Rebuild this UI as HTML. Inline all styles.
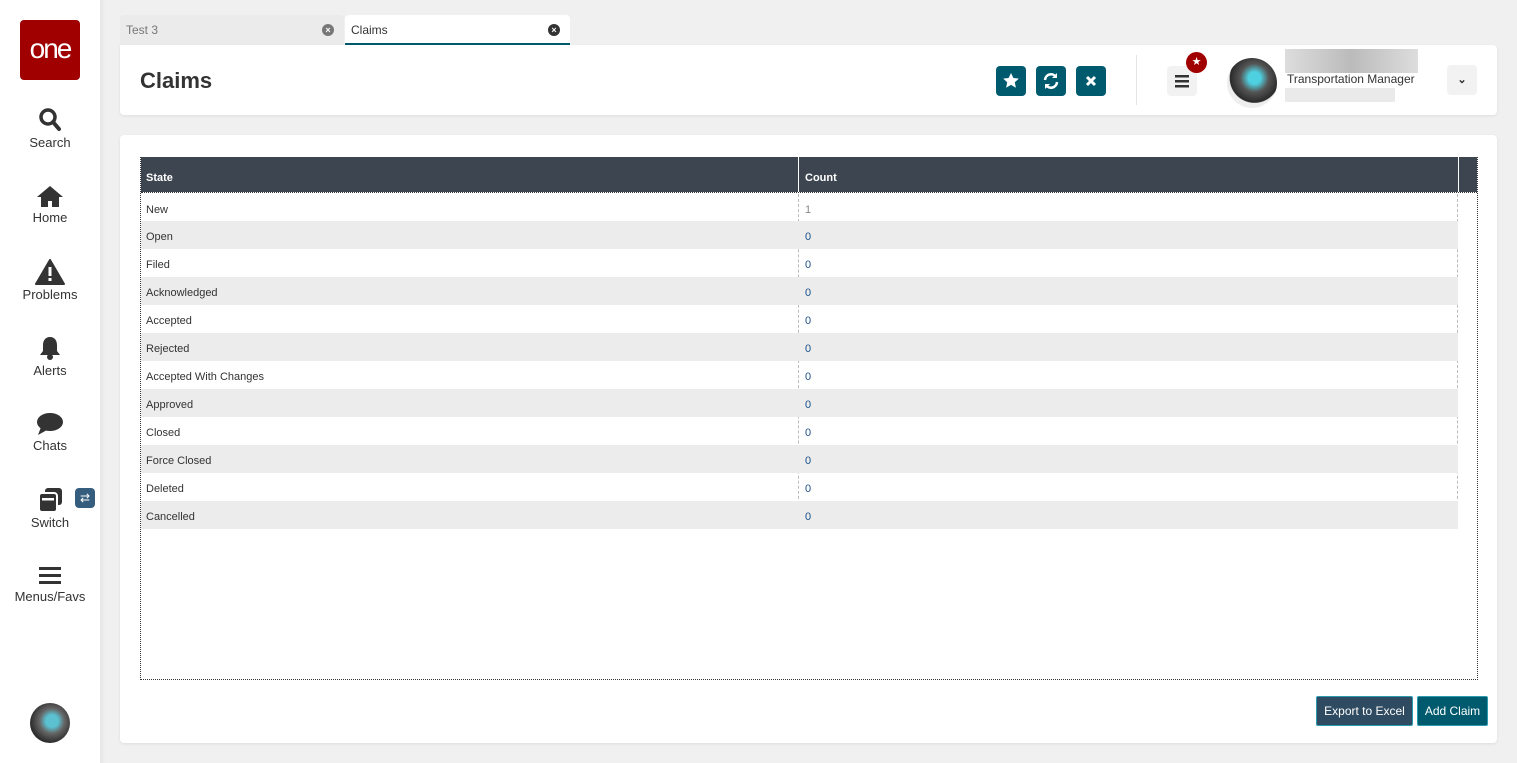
<!DOCTYPE html>
<html><head><meta charset="utf-8"><style>
*{box-sizing:border-box;margin:0;padding:0}
body{width:1517px;height:763px;background:#f0f0f0;font-family:"Liberation Sans",sans-serif;position:relative;overflow:hidden;color:#333}
.side{position:absolute;left:0;top:0;width:100px;height:763px;background:#fff}
.logo{position:absolute;left:20px;top:20px;width:60px;height:60px;background:#a00000;border-radius:4px;color:#fff;font-size:28px;text-align:center;line-height:58px;letter-spacing:-2px}
.nav{position:absolute;left:0;width:100px;text-align:center;font-size:13px;color:#333}
.nav svg{display:block;margin:0 auto 2px}
.tab{position:absolute;top:15px;height:30px;font-size:12px;line-height:30px;padding-left:6px;border-radius:4px 4px 0 0}
.x{position:absolute;right:10px;top:9px;width:12px;height:12px;border-radius:50%;color:#fff;font-size:9px;line-height:12px;text-align:center;font-weight:bold}
.card{position:absolute;background:#fff;border-radius:4px;box-shadow:0 1px 3px rgba(0,0,0,.08)}
.btn{position:absolute;top:66px;width:30px;height:30px;background:#005a6e;border-radius:4px}
.tbl{position:absolute;left:140px;top:157px;width:1338px;height:523px;border:1px dotted #333;border-top:none}
.hd{position:absolute;left:0;top:0;height:35px;width:1336px;background:#3c4550;color:#fff;font-weight:bold;font-size:11px}
.row{position:absolute;left:0;width:1317px;height:28px;font-size:11px;line-height:32px}
.row span{position:absolute;left:5px}
.row b{position:absolute;left:664px;font-weight:normal;color:#1a4f8a}
.bt{position:absolute;top:696px;height:30px;color:#fff;font-size:12px;line-height:28px;text-align:center;border:1px solid #2a9ab0;border-radius:2px}
</style></head><body>
<div class="side">
<div class="logo">one</div>
<div class="nav" style="top:107px"><svg width="24" height="26" viewBox="0 0 24 26"><circle cx="10" cy="10" r="7" fill="none" stroke="#333" stroke-width="3.5"/><path d="M15 15l6 7" stroke="#333" stroke-width="4" stroke-linecap="round"/></svg>Search</div>
<div class="nav" style="top:184px"><svg width="28" height="24" viewBox="0 0 28 24"><path d="M14 2L1 13h4v10h7v-6h4v6h7V13h4z" fill="#333"/></svg>Home</div>
<div class="nav" style="top:259px"><svg width="30" height="26" viewBox="0 0 30 26"><path d="M15 1L1 25h28z" fill="#333" stroke="#333" stroke-linejoin="round" stroke-width="2"/><rect x="13.5" y="8" width="3" height="9" fill="#fff"/><rect x="13.5" y="19" width="3" height="3" fill="#fff"/></svg>Problems</div>
<div class="nav" style="top:335px"><svg width="24" height="26" viewBox="0 0 24 26"><path d="M12 2c-5 0-7 4-7 8v6l-3 4h20l-3-4v-6c0-4-2-8-7-8z" fill="#333"/><circle cx="12" cy="22" r="3" fill="#333"/></svg>Alerts</div>
<div class="nav" style="top:412px"><svg width="28" height="24" viewBox="0 0 28 24"><ellipse cx="14" cy="10" rx="13" ry="9" fill="#333"/><path d="M5 15l-3 8 9-5z" fill="#333"/></svg>Chats</div>
<div class="nav" style="top:487px"><svg width="26" height="26" viewBox="0 0 26 26"><rect x="8" y="1" width="17" height="17" rx="3" fill="#333"/><rect x="2" y="6" width="18" height="19" rx="3" fill="#333" stroke="#fff" stroke-width="2"/><rect x="5" y="11" width="12" height="2.5" fill="#fff"/></svg>Switch</div>
<div style="position:absolute;left:75px;top:488px;width:20px;height:20px;background:#345d7e;border-radius:4px;color:#fff;font-size:12px;text-align:center;line-height:20px">⇄</div>
<div class="nav" style="top:565px"><svg width="24" height="22" viewBox="0 0 24 22"><rect x="1" y="2" width="22" height="3" fill="#333"/><rect x="1" y="9" width="22" height="3" fill="#333"/><rect x="1" y="16" width="22" height="3" fill="#333"/></svg>Menus/Favs</div>
<div style="position:absolute;left:30px;top:703px;width:40px;height:40px;border-radius:50%;background:radial-gradient(circle at 55% 45%,#5bc0d0 0 20%,#666 40%,#222 75%)"></div>
</div>
<div style="position:absolute;left:100px;top:0;width:6px;height:763px;background:linear-gradient(90deg,#e6e6e6,#f0f0f0)"></div>
<div class="tab" style="left:120px;width:224px;background:#ebebeb;color:#777">Test 3<div class="x" style="background:#777">×</div></div>
<div class="tab" style="left:345px;width:225px;background:#fff;color:#333;border-bottom:2px solid #005a6e">Claims<div class="x" style="background:#333">×</div></div>
<div class="card" style="left:120px;top:45px;width:1377px;height:70px;border-radius:0 4px 4px 4px">
<div style="position:absolute;left:20px;top:23px;font-size:22px;font-weight:bold;color:#333">Claims</div>
<div style="position:absolute;left:1016px;top:10px;width:1px;height:50px;background:#e4e4e4"></div>
<div style="position:absolute;left:1047px;top:21px;width:30px;height:30px;background:#f2f2f2;border-radius:4px"><svg width="30" height="30"><rect x="8" y="9" width="14" height="2.5" fill="#333"/><rect x="8" y="14" width="14" height="2.5" fill="#333"/><rect x="8" y="19" width="14" height="2.5" fill="#333"/></svg></div>
<div style="position:absolute;left:1066px;top:7px;width:21px;height:21px;border-radius:50%;background:#a00000;color:#fff;font-size:11px;text-align:center;line-height:21px">★</div>
<div style="position:absolute;left:1107px;top:13px;width:50px;height:50px;border-radius:50%;background:radial-gradient(circle at 55% 40%,#4fd0e0 0 15%,#555 35%,#2a2a2a 60%,#eee 62%)"></div>
<div style="position:absolute;left:1165px;top:4px;width:133px;height:24px;background:linear-gradient(90deg,#ddd,#bbb,#ddd)"></div>
<div style="position:absolute;left:1167px;top:27px;font-size:12px;color:#333">Transportation Manager</div>
<div style="position:absolute;left:1165px;top:43px;width:110px;height:14px;background:#eaeaea"></div>
<div style="position:absolute;left:1327px;top:20px;width:30px;height:30px;background:#f2f2f2;border-radius:4px;text-align:center;line-height:30px;font-size:11px;font-weight:bold">⌄</div>
</div>
<div class="btn" style="left:996px"><svg width="30" height="30"><path d="M15 7l2.4 5 5.4.6-4 3.7 1.1 5.4-4.9-2.8-4.9 2.8 1.1-5.4-4-3.7 5.4-.6z" fill="#fff"/></svg></div>
<div class="btn" style="left:1036px"><svg width="30" height="30"><path d="M9 14a6 6 0 0 1 11-3M21 16a6 6 0 0 1-11 3" stroke="#fff" stroke-width="2.5" fill="none"/><path d="M21 7v5h-5zM9 23v-5h5z" fill="#fff"/></svg></div>
<div class="btn" style="left:1076px"><svg width="30" height="30"><path d="M11 11l8 8M19 11l-8 8" stroke="#fff" stroke-width="3"/></svg></div>
<div class="card" style="left:120px;top:135px;width:1377px;height:608px"></div>
<div class="tbl">
<div class="hd"><span style="position:absolute;left:5px;top:15px">State</span><span style="position:absolute;left:664px;top:15px">Count</span><div style="position:absolute;left:657px;top:0;width:1px;height:35px;background:#fff"></div><div style="position:absolute;left:1317px;top:0;width:1px;height:35px;background:#fff"></div></div>
<div style="position:absolute;left:0;top:35px;width:1336px;border-top:1px dotted #333"></div>
<div style="position:absolute;left:657px;top:37px;height:335px;border-left:1px dashed #bbb"></div>
<div style="position:absolute;left:1316px;top:37px;height:335px;border-left:1px dashed #bbb"></div>
<div class="row" style="top:37px"><span>New</span><b style="color:#888">1</b></div>
<div class="row" style="top:64px;background:#ececec"><span>Open</span><b>0</b></div>
<div class="row" style="top:92px"><span>Filed</span><b>0</b></div>
<div class="row" style="top:120px;background:#ececec"><span>Acknowledged</span><b>0</b></div>
<div class="row" style="top:148px"><span>Accepted</span><b>0</b></div>
<div class="row" style="top:176px;background:#ececec"><span>Rejected</span><b>0</b></div>
<div class="row" style="top:204px"><span>Accepted With Changes</span><b>0</b></div>
<div class="row" style="top:232px;background:#ececec"><span>Approved</span><b>0</b></div>
<div class="row" style="top:260px"><span>Closed</span><b>0</b></div>
<div class="row" style="top:288px;background:#ececec"><span>Force Closed</span><b>0</b></div>
<div class="row" style="top:316px"><span>Deleted</span><b>0</b></div>
<div class="row" style="top:344px;background:#ececec"><span>Cancelled</span><b>0</b></div>
</div>
<div class="bt" style="left:1316px;width:97px;background:#2e4b62">Export to Excel</div>
<div class="bt" style="left:1417px;width:71px;background:#005a6e">Add Claim</div>
</body></html>
